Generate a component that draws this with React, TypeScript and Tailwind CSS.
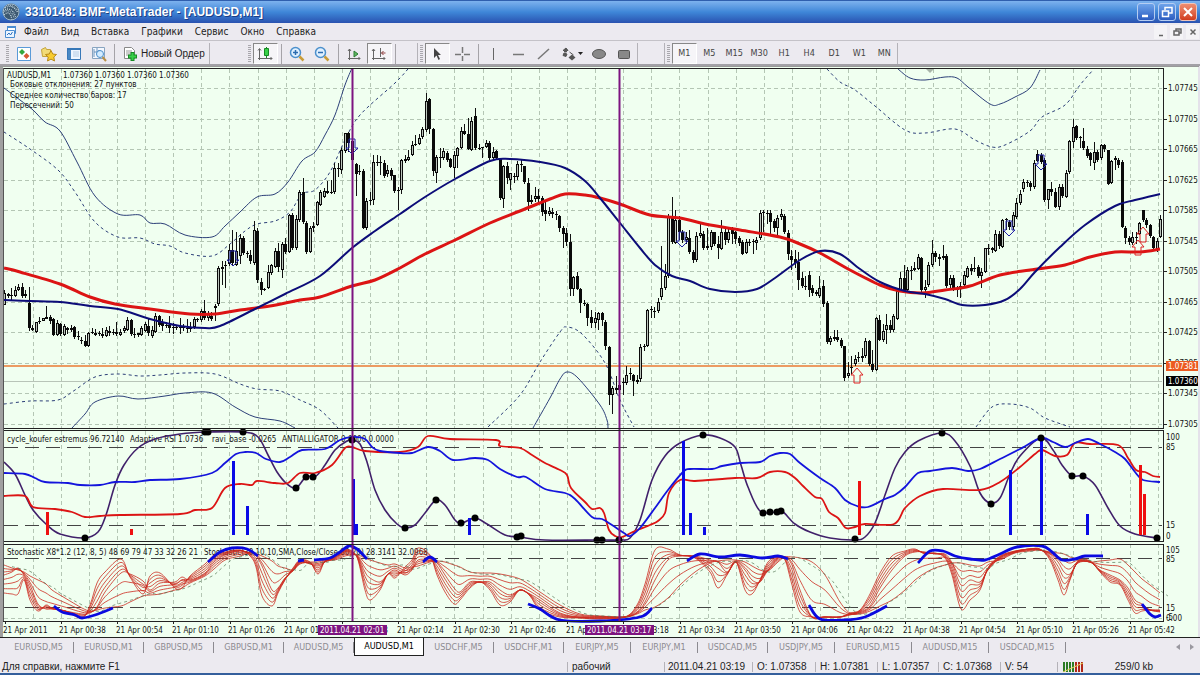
import type { ReactNode } from "react";
import clsx from "clsx";

type Point = [number, number];
// high, open, close, low
type Bar = [number, number, number, number];

const BAR_STEP = 3.515;

const bars: Bar[] = [
  [290,305,293,305],[293,294,296,298],[288,296,295,300],[286,296,290,297],[284,290,287,291],[283,287,296,298],[290,294,296,298],[287,303,328,331],
  [325,328,330,331],[322,332,322,333],[317,322,321,324],[318,321,318,320],[306,319,317,319],[315,317,321,324],[318,319,335,336],[320,335,323,336],
  [323,324,334,336],[324,335,326,336],[327,328,330,334],[325,330,328,332],[326,327,337,339],[331,336,337,340],[337,340,341,344],[335,341,346,347],
  [332,346,333,347],[328,333,332,334],[329,333,335,336],[331,334,333,336],[328,334,336,338],[327,336,330,337],[326,331,333,336],[329,333,332,335],
  [322,332,334,336],[329,335,332,336],[326,331,328,333],[317,330,320,331],[319,320,334,336],[328,335,334,338],[333,335,333,337],[326,335,328,336],
  [322,331,324,332],[318,326,333,336],[326,336,330,338],[313,332,316,333],[315,316,325,327],[319,322,326,331],[322,325,326,328],[316,325,328,333],
  [323,327,328,334],[325,328,327,330],[318,327,328,334],[324,328,327,331],[319,328,329,333],[322,329,327,332],[317,327,319,329],[318,319,320,322],
  [309,320,311,322],[300,311,318,320],[311,318,314,321],[312,316,319,321],[304,306,308,321],[266,304,268,306],[261,269,267,285],[261,266,265,288],
  [244,264,250,266],[230,250,263,265],[232,265,251,266],[234,256,238,264],[236,238,253,255],[251,253,254,258],[250,255,261,264],[221,263,230,265],
  [228,231,280,283],[278,282,290,295],[288,290,289,291],[265,288,272,289],[264,273,265,275],[248,267,251,268],[243,251,267,272],[242,270,244,278],
  [238,244,252,254],[214,252,215,253],[213,215,248,250],[215,248,219,250],[190,220,192,222],[178,192,222,224],[221,223,252,254],[226,252,228,253],
  [222,228,226,232],[201,225,202,226],[190,205,192,206],[188,197,191,198],[181,191,193,194],[180,192,193,194],[163,192,168,194],[163,168,169,177],
  [148,170,150,174],[133,151,133,153],[132,133,143,152],[138,141,160,176],[163,164,174,196],[165,171,172,175],[169,171,228,229],[198,228,201,230],
  [192,201,200,205],[155,200,162,205],[155,163,162,166],[156,162,163,175],[160,163,176,178],[165,174,170,177],[168,170,176,180],[175,175,191,193],
  [187,191,190,210],[159,190,160,194],[155,161,159,163],[150,160,157,161],[141,155,145,156],[135,145,144,146],[134,144,138,145],[127,137,129,139],
  [93,130,101,132],[98,99,129,134],[128,129,171,176],[155,173,157,183],[148,157,158,168],[148,158,151,160],[151,153,160,162],[158,159,167,168],
  [151,168,155,178],[147,156,148,168],[127,148,131,149],[124,131,134,135],[118,134,149,150],[117,150,121,151],[108,116,148,150],[144,148,149,150],
  [147,148,147,158],[140,147,143,148],[141,143,158,160],[147,158,152,160],[150,151,158,160],[158,159,198,200],[165,199,166,208],[162,166,178,184],
  [173,180,173,190],[173,176,177,183],[161,177,164,180],[160,164,165,172],[166,166,182,184],[178,183,202,211],[195,202,200,204],[187,199,196,202],
  [189,196,199,204],[196,198,212,216],[200,210,214,221],[207,214,211,216],[208,212,214,218],[211,215,214,220],[215,216,228,232],[226,228,234,248],
  [228,233,242,246],[234,242,289,296],[276,289,277,296],[272,276,289,290],[288,289,303,313],[300,303,304,306],[303,304,318,326],[310,317,323,328],
  [312,323,318,328],[312,320,313,330],[312,313,320,326],[320,322,346,350],[346,347,395,405],[386,395,388,414],[376,388,390,394],[380,385,390,398],
  [378,382,383,395],[366,383,375,385],[368,373,374,380],[374,375,381,396],[375,382,380,384],[344,379,347,382],[344,347,346,351],[309,346,310,347],
  [306,310,309,318],[307,312,311,318],[298,311,302,313],[246,297,288,300],[264,288,276,290],[214,276,217,278],[197,216,242,244],[210,243,220,244],
  [216,220,232,240],[230,232,240,243],[232,240,237,244],[230,238,252,254],[250,252,260,263],[232,260,236,262],[223,236,233,238],[231,234,248,250],
  [228,248,246,250],[230,247,232,250],[232,232,244,246],[236,244,248,259],[220,249,232,250],[228,232,240,245],[228,240,232,243],[227,229,234,244],
  [231,232,239,244],[236,238,243,246],[240,242,254,255],[239,253,242,254],[239,242,243,246],[239,242,241,254],[237,243,240,250],[210,238,213,240],
  [210,212,213,232],[210,213,213,224],[210,213,222,236],[219,221,228,232],[215,228,218,235],[209,217,214,220],[214,216,232,234],[230,233,254,260],
  [250,256,260,270],[250,259,263,268],[252,262,280,290],[272,278,286,288],[276,286,286,290],[271,275,290,297],[285,288,293,296],[290,292,294,296],
  [276,296,288,298],[280,286,304,307],[301,303,342,344],[336,342,338,345],[330,339,337,341],[330,337,340,342],[338,340,346,348],[346,346,378,381],
  [362,376,373,378],[356,368,367,374],[355,364,359,366],[352,358,357,362],[348,358,356,362],[338,356,341,358],[340,341,364,366],[350,364,370,372],
  [317,370,318,371],[315,320,340,341],[324,340,331,342],[314,330,325,344],[320,325,330,333],[314,330,316,332],[288,319,291,320],[272,290,278,292],
  [265,278,291,293],[267,290,270,293],[266,270,270,280],[262,270,268,271],[254,269,257,270],[257,258,290,292],[280,290,287,298],[262,285,265,287],
  [240,265,253,267],[251,253,257,262],[254,259,257,266],[245,258,256,260],[254,256,286,288],[275,285,278,289],[275,278,289,291],[286,290,289,297],
  [282,289,286,298],[271,285,275,287],[266,277,268,278],[264,268,271,275],[257,269,268,272],[265,267,276,278],[268,276,272,288],[248,272,248,273],
  [244,248,249,255],[247,248,250,253],[230,251,234,252],[231,234,246,249],[219,247,220,248],[218,219,220,230],[220,222,227,230],[212,227,215,230],
  [198,217,203,219],[190,203,194,205],[179,189,182,192],[180,182,183,187],[181,183,187,191],[160,187,163,189],[150,154,161,162],[153,155,162,164],
  [158,160,200,202],[189,200,189,209],[182,189,192,196],[188,192,207,208],[184,207,187,210],[184,187,196,198],[170,197,173,198],[140,172,141,174],
  [119,142,127,148],[125,126,138,140],[136,138,137,148],[128,141,148,150],[146,149,156,158],[152,153,160,166],[142,163,152,170],[150,152,160,162],
  [144,158,145,160],[144,145,149,152],[150,150,184,185],[160,183,161,184],[156,160,158,170],[158,160,165,168],[160,162,227,228],[226,228,238,244],
  [236,238,242,245],[232,243,237,245],[232,238,237,244],[222,234,223,235],[210,210,220,222],[218,220,225,228],[224,225,236,238],[236,237,248,250],
  [238,250,241,252],[215,237,219,238],
];

const slowMa = "4,268 20,272 60,284 90,297 115,304 150,309 190,314 215,314 240,310 270,306 300,300 320,297 352,286 375,280 400,268 425,254 455,240 490,223 520,211 550,199 565,194 585,195 600,198 620,204 650,215 680,218 705,224 740,230 780,237 800,244 820,253 850,270 880,285 900,291 922,293 945,290 970,286 1000,275 1030,270 1065,265 1090,257 1115,252 1140,252 1160,249";
const fastMa = "4,300 30,301 60,302 90,306 118,309 150,319 180,326 205,328 220,326 255,309 285,294 320,276 352,248 375,231 400,214 425,197 455,179 490,161 510,159 540,162 565,168 585,181 600,198 620,223 640,248 655,265 672,276 690,281 710,289 735,292 757,289 775,278 800,260 820,251 840,254 860,269 880,282 905,291 925,294 945,299 962,305 985,305 1005,300 1020,289 1035,272 1060,247 1085,225 1115,206 1135,200 1160,194";

const solidBands = [
  "4,88 20,100 33,110 45,122 60,131 77,162 95,196 118,214 140,215 150,223 165,224 185,235 212,237 225,226 240,212 257,197 275,194 288,182 302,161 315,152 325,135 335,115 345,85 352,68",
  "898,69 910,78 925,80 945,77 957,78 968,87 990,104 1000,104 1015,97 1030,88 1040,70",
  "72,428 85,414 95,402 118,396 138,399 165,396 185,393 212,393 235,407 255,417 280,421 295,428",
  "533,428 550,398 560,379 567,372 578,378 600,405 607,420 608,428",
];
const dashedBands = [
  "4,132 30,149 58,170 75,192 95,222 118,237 140,238 155,244 170,246 185,253 212,256 230,244 245,231 257,224 275,221 290,212 302,194 315,190 330,172 345,140 360,115 395,83 408,69",
  "827,69 840,82 855,90 875,106 905,130 925,133 955,129 975,140 992,147 1005,145 1030,131 1042,117 1065,105 1080,85 1093,70",
  "4,404 30,401 58,400 75,390 95,377 118,374 140,376 160,375 185,373 215,374 240,384 257,389 280,391 300,400 320,410 338,428",
  "488,427 520,395 540,362 560,332 567,327 582,334 605,363 620,400 634,427",
  "976,427 992,407 1010,404 1030,408 1045,418 1070,427",
];

const raviBlue = "4,473 25,474 35,478 45,482 68,483 80,485 100,485 115,482 135,482 150,480 180,479 212,473 225,463 236,454 245,452 256,453 266,459 280,462 290,457 302,450 325,449 340,440 352,437 365,439 372,447 380,451 400,453 412,453 428,447 440,451 453,460 475,458 488,460 500,469 517,477 526,477 545,489 565,493 575,499 592,517 602,519 612,525 624,533 630,536 640,528 655,508 668,490 683,472 690,469 712,469 722,466 740,463 760,462 770,456 780,453 790,454 800,463 820,478 835,488 845,500 857,506 868,507 885,499 895,495 905,487 918,473 930,471 952,468 968,471 980,469 1000,459 1020,449 1041,438 1053,442 1065,447 1075,443 1088,439 1100,444 1115,452 1125,459 1135,472 1143,480 1160,482";
const raviRed = "4,496 25,496 33,507 55,509 72,512 85,517 100,516 120,515 180,514 195,510 212,508 225,488 240,484 252,485 257,481 275,483 288,483 300,473 315,473 332,465 345,448 352,447 365,451 400,452 418,447 428,436 450,439 496,440 500,446 520,448 532,455 545,463 560,470 567,475 571,488 585,502 592,509 600,508 604,513 609,530 615,536 622,537 635,531 650,525 658,521 665,513 669,493 680,480 695,481 735,478 757,478 770,472 785,472 795,478 803,486 815,497 822,499 829,512 838,518 846,528 855,527 865,524 894,524 905,508 920,496 943,489 980,490 1000,482 1020,467 1035,454 1042,450 1055,456 1067,455 1075,443 1090,444 1118,445 1128,458 1136,470 1145,472 1153,476 1160,477";
const cycle = "4,462 15,474 25,495 33,510 47,525 60,534 84,538 98,532 106,515 115,485 124,465 138,448 155,439 180,434 208,432 243,432 258,437 268,455 277,472 287,484 296,488 306,477 316,476 325,465 335,450 347,441 353,440 360,444 367,462 375,490 385,510 397,524 405,528 415,525 425,513 436,500 445,505 455,520 462,523 475,518 487,524 505,535 520,537 545,540 600,540 620,540 630,538 640,520 652,480 665,456 680,443 703,435 720,438 735,447 741,465 748,487 760,511 775,512 782,511 795,524 810,532 830,538 855,540 865,537 875,523 885,495 895,468 905,452 918,441 942,433 955,441 970,466 980,493 990,503 1000,498 1010,474 1020,456 1041,438 1053,450 1062,465 1072,476 1083,476 1095,485 1108,508 1120,526 1135,534 1157,538";

const cycleDots: Point[] = [
  [85,538],[205,432],[208,432],[243,432],[296,488],[306,477],[313,477],[352,440],[405,528],[436,500],[461,523],[475,518],[517,537],[521,536],
  [597,540],[602,540],[619,540],[703,435],[763,513],[770,512],[777,512],[781,511],[855,539],[942,433],[991,504],[1041,438],[1072,476],[1083,476],[1157,538],
];

const signals = [
  { x: 47, top: 512, up: false }, { x: 131, top: 529, up: false }, { x: 233, top: 461, up: true }, { x: 247, top: 506, up: true },
  { x: 353, top: 479, up: true }, { x: 356, top: 524, up: true }, { x: 469, top: 518, up: true }, { x: 683, top: 441, up: true },
  { x: 690, top: 513, up: true }, { x: 704, top: 527, up: true }, { x: 859, top: 481, up: false }, { x: 1010, top: 470, up: true },
  { x: 1041, top: 438, up: true }, { x: 1087, top: 514, up: true }, { x: 1140, top: 465, up: false }, { x: 1144, top: 494, up: false },
];

// x, fast, middle, slow
const stochastic: Bar[] = [
  [4,593,575,565],[12,594,572,568],[18,594,568,570],[24,580,575,572],[30,600,585,576],[38,611,604,580],[46,605,609,584],[52,608,609,590],[65,611,611,598],
  [82,618,614,608],[90,605,613,611],[97,583,607,610],[105,572,592,608],[121,559,573,606],[130,577,574,602],[143,594,581,596],[150,576,590,595],[160,573,583,594],
  [175,588,582,590],[182,588,577,588],[190,576,580,583],[205,564,573,576],[214,555,562,569],[225,552,555,560],[240,550,551,556],[250,556,553,552],[256,567,556,554],
  [262,596,566,556],[272,606,590,561],[278,593,588,566],[285,580,578,568],[293,568,571,570],[300,560,562,564],[310,562,564,562],[318,574,566,562],[325,561,562,560],
  [335,556,558,560],[345,550,552,556],[352,551,553,555],[358,560,557,555],[365,590,572,558],[370,600,578,560],[380,590,582,563],[388,574,574,565],[395,578,570,564],
  [405,567,575,568],[412,560,570,567],[418,548,560,566],[430,555,560,562],[437,575,563,561],[445,592,575,562],[454,604,588,565],[460,600,592,567],[470,588,582,572],
  [480,582,582,573],[490,590,582,573],[500,605,590,574],[510,602,595,576],[520,590,590,579],[530,596,594,585],[540,610,600,592],[560,617,613,605],[580,618,617,614],
  [600,619,617,616],[625,617,617,617],[637,605,612,614],[645,584,602,610],[655,550,580,607],[668,549,560,598],[680,555,556,585],[695,558,556,572],[710,572,560,563],
  [718,588,562,561],[727,575,572,560],[736,562,562,560],[745,590,570,562],[752,594,580,566],[760,580,582,570],[768,562,570,571],[778,557,558,562],[785,560,557,557],
  [792,585,565,557],[800,612,590,558],[812,617,617,562],[825,617,617,575],[840,617,617,602],[850,613,615,613],[860,610,612,614],[870,594,606,611],[880,573,588,606],
  [892,556,570,600],[905,551,556,590],[915,549,552,580],[925,554,552,573],[935,553,554,568],[945,558,554,565],[952,575,563,563],[961,609,585,563],[970,600,580,565],
  [980,590,582,566],[988,568,570,562],[1000,556,558,560],[1015,551,552,553],[1030,549,549,551],[1040,549,550,550],[1050,560,554,552],[1058,580,562,553],
  [1064,595,572,554],[1070,580,574,557],[1078,561,563,559],[1090,561,562,562],[1100,572,570,561],[1110,582,575,560],[1120,585,580,559],[1128,600,588,565],
  [1135,613,600,572],[1142,611,604,579],[1150,610,610,585],[1160,610,612,593],
];

const extremes = [
  "54,606 62,612 75,615 82,618 95,615 113,608",
  "208,562 220,552 232,548 247,549 258,556",
  "298,561 304,560",
  "314,560 330,558 340,552 349,546 357,549 367,559",
  "423,562 430,557 437,562",
  "528,604 540,609 560,620 600,621 640,617 652,608",
  "687,561 700,554 720,557 740,555 762,558 778,556 788,559",
  "809,605 820,619 845,620 865,617 887,606",
  "918,563 930,551 943,551 955,556 970,559 985,560 1000,554 1017,547 1042,546 1052,552 1062,560 1075,559 1085,556 1103,556",
  "1142,604 1150,614 1155,617 1161,615",
];

const prices = ["1.07745", "1.07705", "1.07665", "1.07625", "1.07585", "1.07545", "1.07505", "1.07465", "1.07425", "1.07385", "1.07345", "1.07305"];
const times = [
  "2011", "00:38", "00:54", "01:10", "01:26", "01:42", "01:58", "02:14", "02:30", "02:46", "03:02",
  "03:18", "03:34", "03:50", "04:06", "04:22", "04:38", "04:54", "05:10", "05:26", "05:42",
];

// Catmull-Rom spline through the points
function smooth(points: Point[]) {
  let d = `M${points[0][0]} ${points[0][1]}`;
  for (let i = 0; i < points.length - 1; i++) {
    const a = points[i - 1] ?? points[i];
    const b = points[i];
    const c = points[i + 1];
    const e = points[i + 2] ?? c;
    d += `C${b[0] + (c[0] - a[0]) / 6} ${b[1] + (c[1] - a[1]) / 6} ${c[0] - (e[0] - b[0]) / 6} ${c[1] - (e[1] - b[1]) / 6} ${c[0]} ${c[1]}`;
  }
  return d;
}

function parse(line: string) {
  return line.split(" ").map((p) => p.split(",").map(Number) as Point);
}

function stochasticLine(k: number) {
  return smooth(
    stochastic.map(([x, fast, mid, slow]) => [x, k < 0.5 ? fast + (mid - fast) * k * 2 : mid + (slow - mid) * (k - 0.5) * 2])
  );
}

function Curve({ line, color, width = 1, dash }: { line: string; color: string; width?: number; dash?: string }) {
  return <path d={smooth(parse(line))} fill="none" stroke={color} strokeWidth={width} strokeDasharray={dash} strokeLinejoin="round" />;
}

function DownArrow({ x, y }: { x: number; y: number }) {
  return <path d={`M${x - 3} ${y}h6v9h3l-6 6l-6 -6h3z`} fill="none" stroke="#2222aa" />;
}

function UpArrow({ x, y }: { x: number; y: number }) {
  return <path d={`M${x - 3} ${y + 15}h6v-8h3l-6 -7l-6 7h3z`} fill="none" stroke="#dd2222" />;
}

function ChartGrid() {
  const columns = Array.from({ length: 41 }, (_, i) => Math.round(32.5 + i * 28.13));
  return (
    <g stroke="#b4c6b4" strokeDasharray="4 3" shapeRendering="crispEdges">
      {columns.map((x) => (
        <path key={x} d={`M${x}.5 69V428M${x}.5 431V541M${x}.5 544V621`} />
      ))}
      {prices.map((p, i) => (
        <path key={p} d={`M4 ${Math.round(88 + i * 30.5)}.5H1162`} />
      ))}
      <path d="M4 541.5H1162M4 618.5H1162" />
    </g>
  );
}

function PriceBars() {
  return (
    <g shapeRendering="crispEdges">
      {bars.map(([high, open, close, low], i) => {
        const x = Math.round(4 + i * BAR_STEP);
        const top = Math.min(open, close);
        const height = Math.max(Math.abs(close - open), 1);
        return (
          <g key={i}>
            <rect x={x} y={high} width={1} height={low - high} fill="#111" />
            <rect x={x - 1} y={top} width={3} height={height} fill="#0a0a0a" />
            {close < open && height > 2 && <rect x={x} y={top + 1} width={1} height={height - 2} fill="#bcc6bc" />}
          </g>
        );
      })}
    </g>
  );
}

function Chart() {
  return (
    <svg
      viewBox="0 66 1200 571"
      className="block w-full h-auto font-['DejaVu_Sans_Condensed','DejaVu_Sans',sans-serif]"
      role="img"
      aria-label="AUDUSD,M1"
      fontSize={8}
      fill="#111"
    >
      <defs>
        <clipPath id="plot">
          <rect x={4} y={68} width={1159} height={553} />
        </clipPath>
      </defs>
      <rect x={0} y={66} width={1200} height={571} fill="#f0fff0" />
      <rect x={0} y={66} width={3} height={571} fill="#a0a0a0" />
      <rect x={1198} y={66} width={2} height={571} fill="#e4e2ea" />
      <ChartGrid />

      <g clipPath="url(#plot)">
        <path d="M4 381.5H1162" stroke="#b8c4b8" shapeRendering="crispEdges" />
        <path d="M4 366H1162" stroke="#ec9b62" strokeWidth={2} shapeRendering="crispEdges" />
        {solidBands.map((line) => (
          <Curve key={line} line={line} color="#2c3f78" />
        ))}
        {dashedBands.map((line) => (
          <Curve key={line} line={line} color="#2c3f78" dash="3 3" />
        ))}
        <PriceBars />
        <Curve line={slowMa} color="#dc1414" width={3} />
        <Curve line={fastMa} color="#0c0c78" width={2} />
        <DownArrow x={233} y={251} />
        <DownArrow x={352} y={139} />
        <DownArrow x={682} y={232} />
        <DownArrow x={1009} y={221} />
        <DownArrow x={1041} y={155} />
        <UpArrow x={857} y={368} />
        <UpArrow x={1143} y={227} />
        <UpArrow x={1138} y={240} />
        <path d="M926 69h8l-4 4z" fill="#a8b4a8" />
      </g>

      <g stroke="#444" strokeDasharray="14 7" shapeRendering="crispEdges">
        <path d="M4 447.5H1162M4 525.5H1162M4 558.5H1162M4 607.5H1162" />
      </g>

      <g>
        <text x={7} y={442}>cycle_koufer estremus 96.72140</text>
        <text x={130} y={442}>Adaptive RSI 1.0736</text>
        <text x={212} y={442}>ravi_base -0.0265</text>
        <text x={282} y={442}>ANTIALLIGATOR 0.0000 0.0000</text>
        <text x={7} y={555}>Stochastic X8*1.2 (12, 8, 5) 48 69 79 47 33 32 26 21</text>
        <text x={204} y={555}>Stochastic(30,10,10,SMA,Close/Close,80,20) 28.3141 32.0968</text>
        <text x={7} y={78}>AUDUSD,M1</text>
        <text x={63} y={78}>1.07360 1.07360 1.07360 1.07360</text>
        <text x={10} y={87}>Боковые отклонения: 27 пунктов</text>
        <text x={10} y={98}>Среднее количество баров: 17</text>
        <text x={10} y={108}>Пересечений: 50</text>
      </g>

      <Curve line={cycle} color="#40206a" width={1.6} />
      <Curve line={raviRed} color="#dc1414" width={1.8} />
      <Curve line={raviBlue} color="#1414dc" width={1.8} />
      {signals.map((s) => (
        <rect key={s.x} x={s.x - 1} y={s.top} width={3} height={535 - s.top} fill={s.up ? "#0a0ae6" : "#ee1010"} />
      ))}
      {cycleDots.map(([x, y], i) => (
        <circle key={i} cx={x} cy={y} r={3.5} fill="#000" />
      ))}

      {[0, 0.12, 0.25, 0.38, 0.5, 0.65, 0.82, 1].map((k) => (
        <path key={k} d={stochasticLine(k)} fill="none" stroke="#cc2a1e" strokeWidth={0.8} />
      ))}
      <path d={stochasticLine(0.92)} fill="none" stroke="#557755" strokeWidth={0.7} strokeDasharray="3 3" transform="translate(8 0)" clipPath="url(#plot)" />
      {extremes.map((line) => (
        <Curve key={line} line={line} color="#0a0ae0" width={2.8} />
      ))}

      <path d="M352.5 68V622M619.5 68V622" stroke="#7d1480" strokeWidth={2} />

      <g stroke="#222" fill="none" shapeRendering="crispEdges">
        <path d="M3 68.5H1163.5V428.5M3 428.5H1164M3 430.5H1164M1163.5 430V541M3 541.5H1164M3 544.5H1164M1163.5 544V621M3 621.5H1164" />
        <path d="M3.5 68V621" stroke="#555" />
        <path d="M0 66.5H1199" stroke="#999" />
        {prices.map((p, i) => (
          <path key={p} d={`M1163 ${Math.round(88 + i * 30.5)}.5h4`} />
        ))}
        {times.map((t, i) => (
          <path key={t} d={`M${Math.round(4.5 + i * 56.26)}.5 621v3`} />
        ))}
      </g>

      {prices.map((p, i) => (
        <text key={p} x={1168} y={Math.round(91 + i * 30.5)}>{p}</text>
      ))}
      <rect x={1166} y={361} width={32} height={10} fill="#ec5a20" />
      <text x={1168} y={369} fill="#fff">1.07381</text>
      <rect x={1166} y={376} width={32} height={10} fill="#000" />
      <text x={1168} y={384} fill="#fff">1.07360</text>
      <text x={1166} y={440}>100</text>
      <text x={1166} y={450}>85</text>
      <text x={1166} y={528}>15</text>
      <text x={1166} y={539}>0</text>
      <text x={1166} y={553}>105</text>
      <text x={1166} y={562}>85</text>
      <text x={1166} y={611}>15</text>
      <text x={1166} y={620}>-5</text>
      <text x={1166} y={621}>0.00</text>

      {times.map((t, i) => (
        <text key={t} x={Math.round(3 + i * 56.26)} y={633}>{`21 Apr ${t}`}</text>
      ))}
      <rect x={318} y={625} width={69} height={10} fill="#7d1480" />
      <text x={320} y={633} fill="#fff">2011.04.21 02:01</text>
      <rect x={585} y={625} width={69} height={10} fill="#7d1480" />
      <text x={587} y={633} fill="#fff">2011.04.21 03:17</text>
    </svg>
  );
}

function Icon({ children }: { children: ReactNode }) {
  return (
    <svg viewBox="0 0 16 16" width={16} height={16} fill="none" aria-hidden="true">
      {children}
    </svg>
  );
}

function ToolButton({ label, active, children }: { label: string; active?: boolean; children: ReactNode }) {
  return (
    <button
      type="button"
      title={label}
      aria-pressed={active}
      className={clsx(
        "flex h-[21px] w-[25px] shrink-0 items-center justify-center",
        active && "border border-t-[#888] border-l-[#888] border-r-white border-b-white bg-[#f6f5f8]"
      )}
    >
      {children}
    </button>
  );
}

function Separator() {
  return <div className="mx-[3px] h-[20px] w-px shrink-0 bg-[#a5a3a8]" />;
}

function Edge() {
  return <div className="h-[22px] w-px shrink-0 bg-[#b4b2b8]" />;
}

function Grip() {
  return <div className="mx-[2px] h-[18px] w-[3px] shrink-0 bg-[repeating-linear-gradient(#a9a7ad_0_1px,#eceaf0_1px_2px)]" />;
}

function TitleBar() {
  return (
    <header className="flex h-[23px] shrink-0 items-center gap-[5px] bg-linear-to-b from-[#7db2ee] via-[#3f87d8] to-[#2a52b0] border-t border-[#2f5fae] px-[2px] text-white">
      <svg viewBox="0 0 18 18" width={18} height={18} aria-hidden="true">
        <circle cx="9" cy="9" r="8.5" fill="#3c5870" />
        <g fill="none" stroke="#c4d6e0" strokeDasharray="1 1">
          <path d="M3 5c4-3 9-2 12 4M1.500 8c4-4 10-2 12 6M2 12c4-4 7-2 8 5" strokeWidth="1.300" />
          <path d="M6 2c5 0 9 3 10 7M1 10c3-4 9-3 11 5" />
        </g>
        <circle cx="9" cy="9" r="8" fill="none" stroke="#9fb8cc" />
      </svg>
      <h1 className="flex-1 truncate font-['Liberation_Sans',sans-serif] text-[12px] leading-[16px] font-bold [text-shadow:1px_1px_0_#1b3f86]">
        3310148: BMF-MetaTrader - [AUDUSD,M1]
      </h1>
      <div className="flex gap-[3px] pr-px">
        <button type="button" title="Свернуть" className="h-[18px] w-[18px] rounded-[3px] border border-[#b5cdf2] bg-linear-to-b from-[#6ea3ea] to-[#2c5cc0]">
          <svg viewBox="0 0 16 16"><path d="M4 12h6" stroke="#fff" strokeWidth="2.500" /></svg>
        </button>
        <button type="button" title="Развернуть" className="h-[18px] w-[18px] rounded-[3px] border border-[#b5cdf2] bg-linear-to-b from-[#6ea3ea] to-[#2c5cc0]">
          <svg viewBox="0 0 16 16" fill="none" stroke="#fff"><path d="M6 6V3.500h7V9h-3" strokeWidth="1.500" /><path d="M3.500 7h6v5.500h-6z" strokeWidth="1.500" /></svg>
        </button>
        <button type="button" title="Закрыть" className="h-[18px] w-[18px] rounded-[3px] border border-[#f0c4b8] bg-linear-to-b from-[#ee8d70] to-[#d13c1c]">
          <svg viewBox="0 0 16 16"><path d="M4 4l8 8M12 4l-8 8" stroke="#fff" strokeWidth="2" /></svg>
        </button>
      </div>
    </header>
  );
}

function MenuBar() {
  return (
    <nav className="flex h-[18px] shrink-0 items-center border-b border-[#c4c2c8] pl-1 text-[10px]">
      <svg viewBox="0 0 13 13" width={13} height={13} fill="none" aria-hidden="true">
        <path d="M3.500 1.500h8v7h-8z" fill="#fff" stroke="#4c8cd0" />
        <path d="M3 2h9" stroke="#4c8cd0" strokeWidth="2" />
        <path d="M1.500 5.500h9v7h-9z" fill="#eaf4ff" stroke="#4c8cd0" />
        <path d="M3 10l2-2 1.500 2 2-3" stroke="#2b6fc0" />
      </svg>
      <div className="flex flex-1 gap-3 pl-[7px]">
        {["Файл", "Вид", "Вставка", "Графики", "Сервис", "Окно", "Справка"].map((item) => (
          <button key={item} type="button">{item}</button>
        ))}
      </div>
      <div className="flex gap-[3px] pr-px">
        {[
          { name: "Свернуть окно", path: "M4 9.500h4" },
          { name: "Восстановить окно", path: "M5 4.500V3h5v4H8M3 5h5v4H3z" },
          { name: "Закрыть окно", path: "M3.500 3.500l5 5M8.500 3.500l-5 5" },
        ].map((b) => (
          <button key={b.name} type="button" title={b.name} className="flex h-[14px] w-[13px] items-center justify-center bg-[#f4f3f6]">
            <svg viewBox="0 0 12 12" width={12} height={12}><path d={b.path} fill="none" stroke="#666" strokeWidth="1.500" /></svg>
          </button>
        ))}
      </div>
    </nav>
  );
}

function Toolbar() {
  return (
    <div className="flex h-[25px] shrink-0 items-center overflow-hidden border-b-2 border-[#a2a0a6] pt-[2px] text-[9px] text-[#444]">
      <div className="flex shrink-0 items-center pl-1 pr-[36px]">
        <Grip />
        <ToolButton label="Новый график">
          <Icon>
            <path d="M1.500 1.500h13v13h-13z" fill="#fff" stroke="#5a9ad8" />
            <path d="M6 3l3 3-3 3-3-3z" fill="#34a83c" />
            <path d="M10.500 7l3 3-3 3-3-3z" fill="#d85a32" />
          </Icon>
        </ToolButton>
        <ToolButton label="Профили">
          <Icon>
            <path d="M.5 3.500l4-2 1 2h4v7h-8z" fill="#f2dc78" stroke="#c4a43c" />
            <path d="M10 4.500l1.800 3.500 3.700.5-2.700 2.500.7 4-3.500-1.900L6.500 15l.7-4-2.700-2.500 3.700-.5z" fill="#f8cc30" stroke="#b88a18" />
          </Icon>
        </ToolButton>
        <ToolButton label="Навигатор">
          <Icon>
            <path d="M1.500 2.500h13v11h-13z" fill="#eef6ff" stroke="#3878b8" />
            <path d="M1 3h14" stroke="#3878b8" strokeWidth="2" />
            <path d="M2 4h3v9H2z" fill="#4a88c4" />
            <path d="M7 6h6M7 8h6M7 10h6" stroke="#b4cce4" />
          </Icon>
        </ToolButton>
        <ToolButton label="Окно данных">
          <Icon>
            <path d="M1.500 1.500h12v11h-12z" fill="#f4f8ff" stroke="#88a4c0" />
            <path d="M3 3v8M6 2v7M3 6h3l2-2 2 2" stroke="#6c94bc" />
            <circle cx="9" cy="8" r="3.500" fill="#d4ecff" stroke="#4c90cc" />
            <path d="M11.500 11l3.500 4" stroke="#b89048" strokeWidth="2" />
          </Icon>
        </ToolButton>
        <Separator />
        <button type="button" className="flex shrink-0 items-center gap-[3px] px-1 font-['Liberation_Sans',sans-serif] text-[10px] whitespace-nowrap text-[#222]">
          <Icon>
            <path d="M2.500 1.500h7l3 3v8h-10z" fill="#fff" stroke="#888" />
            <path d="M4 5h6M4 7h6M4 9h4" stroke="#999" />
            <path d="M10.500 6v9M6 10.500h9" stroke="#178a24" strokeWidth="4" />
            <path d="M10.500 7v7M7 10.500h7" stroke="#38d048" strokeWidth="2" />
          </Icon>
          Новый Ордер
        </button>
        <Edge />
      </div>

      <div className="flex shrink-0 items-center">
        <Grip />
        <ToolButton label="Японские свечи" active>
          <Icon>
            <path d="M2.500 3v11M1 12.500h14M1 4.500l1.500-2L4 4.500M13.500 11l1.500 1.500-1.500 1.500" stroke="#666" />
            <path d="M9.500 1v11" stroke="#178a24" />
            <path d="M7.500 2.500h4v7h-4z" fill="#38d048" stroke="#178a24" />
          </Icon>
        </ToolButton>
        <Separator />
        <ToolButton label="Приблизить">
          <Icon>
            <circle cx="6.500" cy="6.500" r="5" fill="#dff0ff" stroke="#4c90cc" strokeWidth="1.500" />
            <path d="M4 6.500h5M6.500 4v5" stroke="#2c6cb0" strokeWidth="1.500" />
            <path d="M10.500 10.500l4 4" stroke="#c89c38" strokeWidth="2.500" />
          </Icon>
        </ToolButton>
        <ToolButton label="Отдалить">
          <Icon>
            <circle cx="6.500" cy="6.500" r="5" fill="#dff0ff" stroke="#4c90cc" strokeWidth="1.500" />
            <path d="M4 6.500h5" stroke="#2c6cb0" strokeWidth="1.500" />
            <path d="M10.500 10.500l4 4" stroke="#c89c38" strokeWidth="2.500" />
          </Icon>
        </ToolButton>
        <Separator />
        <ToolButton label="Автопрокрутка">
          <Icon>
            <path d="M3.500 3v11M2 12.500h12M2 5l1.500-2L5 5M12.500 11l1.500 1.500-1.500 1.500" stroke="#666" />
            <path d="M8 5l4 3-4 3z" fill="#5cb860" stroke="#2c7c34" />
          </Icon>
        </ToolButton>
        <ToolButton label="Сдвиг графика" active>
          <Icon>
            <path d="M2.500 3v11M1 12.500h13M1 5l1.500-2L4 5M12.500 11l1.500 1.500-1.500 1.500" stroke="#666" />
            <path d="M9.500 2v9" stroke="#666" />
            <path d="M10.500 7h4M12.500 5l-2 2 2 2" stroke="#8c3c3c" />
          </Icon>
        </ToolButton>
        <Separator />
      </div>

      <div className="flex shrink-0 items-center pl-[18px]">
        <Edge />
        <Grip />
        <ToolButton label="Курсор" active>
          <Icon><path d="M5 2v10l2.500-2.500L9.500 14l1.500-1-2-4h3z" fill="#444" /></Icon>
        </ToolButton>
        <ToolButton label="Перекрестие">
          <Icon><path d="M8.500 1v6M8.500 10v5M1 8.500h6M10 8.500h6" stroke="#777" strokeWidth="1.500" /></Icon>
        </ToolButton>
        <Separator />
        <ToolButton label="Вертикальная линия">
          <Icon><path d="M7.500 2v12" stroke="#666" /></Icon>
        </ToolButton>
        <ToolButton label="Горизонтальная линия">
          <Icon><path d="M2 8.500h11" stroke="#777" strokeWidth="1.500" /></Icon>
        </ToolButton>
        <ToolButton label="Трендовая линия">
          <Icon><path d="M2 13L13 3" stroke="#777" strokeWidth="1.500" /></Icon>
        </ToolButton>
        <button type="button" title="Стрелки" className="flex h-[21px] w-[30px] items-center justify-center gap-px">
          <Icon>
            <path d="M5 2l2 2.500h-1.500v1.500h-2V4.500H2zM3 7l3 1-1 2.500-3-1zM8.500 6l4 3" fill="#555" stroke="#555" />
            <path d="M11 8.500l3.500 3-3.500 3-3.500-3z" fill="#555" />
          </Icon>
          <svg viewBox="0 0 5 3" width={5} height={3}><path d="M0 0h5L2.500 3z" fill="#222" /></svg>
        </button>
        <ToolButton label="Эллипс">
          <Icon><ellipse cx="8" cy="8" rx="6.500" ry="4.500" fill="#888" stroke="#555" /></Icon>
        </ToolButton>
        <ToolButton label="Прямоугольник">
          <Icon><rect x="2.500" y="4.500" width="11" height="8" rx="1" fill="#888" stroke="#555" /></Icon>
        </ToolButton>
        <Edge />
      </div>

      <div className="flex shrink-0 items-center pl-[26px]">
        <Edge />
        <Grip />
        {["M1", "M5", "M15", "M30", "H1", "H4", "D1", "W1", "MN"].map((period, i) => (
          <ToolButton key={period} label={period} active={i === 0}>{period}</ToolButton>
        ))}
        <Edge />
      </div>
    </div>
  );
}

const tabs = [
  "EURUSD,M5", "EURUSD,M1", "GBPUSD,M5", "GBPUSD,M1", "AUDUSD,M5", "AUDUSD,M1", "USDCHF,M5", "USDCHF,M1",
  "EURJPY,M5", "EURJPY,M1", "USDCAD,M5", "USDJPY,M5", "EURUSD,M15", "AUDUSD,M15", "USDCAD,M15",
];

function ChartTabs() {
  return (
    <div className="flex h-[20px] shrink-0 items-start overflow-hidden border-t border-[#222] pl-1 text-[9px] text-[#8c8a90]">
      <div className="flex flex-1" role="tablist">
        {tabs.map((tab) => {
          const active = tab === "AUDUSD,M1";
          return (
            <button
              key={tab}
              type="button"
              role="tab"
              aria-selected={active}
              className={clsx(
                "flex h-[18px] shrink-0 items-center justify-center",
                tab.endsWith("M15") ? "w-[77px]" : tab.includes("JPY") ? "w-[67px]" : "w-[70px]",
                active && "border border-t-0 border-[#222] bg-white text-black"
              )}
            >
              <span className="flex-1">{tab}</span>
              {!active && <span className="h-[11px] w-px bg-[#8c8a90]" />}
            </button>
          );
        })}
      </div>
      <div className="flex h-[18px] items-center gap-[10px] pr-[6px]">
        <button type="button" title="Назад">
          <svg viewBox="0 0 4 6" width={4} height={6}><path d="M4 0v6L0 3z" fill="#9a98a0" /></svg>
        </button>
        <button type="button" title="Вперёд">
          <svg viewBox="0 0 4 6" width={4} height={6}><path d="M0 0v6l4-3z" fill="#9a98a0" /></svg>
        </button>
      </div>
    </div>
  );
}

function StatusBar() {
  return (
    <footer className="flex h-[18px] shrink-0 items-center border-b-2 border-[#345f9c] pt-[3px] font-['Liberation_Sans',sans-serif] text-[10px] whitespace-nowrap">
      <div className="flex-1 pl-[2px]">Для справки, нажмите F1</div>
      <div className="w-[97px] border-l border-[#b4b2b8] pl-1">рабочий</div>
      <div className="w-[88px] border-l border-[#b4b2b8] pl-[3px]">2011.04.21 03:19</div>
      <div className="w-[63px] border-l border-[#b4b2b8] pl-1">O: 1.07358</div>
      <div className="w-[62px] border-l border-[#b4b2b8] pl-1">H: 1.07381</div>
      <div className="w-[61px] border-l border-[#b4b2b8] pl-1">L: 1.07357</div>
      <div className="w-[62px] border-l border-[#b4b2b8] pl-1">C: 1.07368</div>
      <div className="w-[57px] border-l border-[#b4b2b8] pl-1">V: 54</div>
      <div className="flex w-[143px] items-center border-l border-[#b4b2b8] pl-[5px]">
        <svg viewBox="0 0 21 10" width={21} height={10} aria-hidden="true">
          <path d="M1 0v10M4 0v10M7 0v10M10 0v10" stroke="#2c7c24" strokeWidth="2" />
          <path d="M13 0v10M16 0v10M19 0v10" stroke="#b02818" strokeWidth="2" />
          <path d="M0 10L20 1" stroke="#e8d45c" />
        </svg>
        <span className="flex-1 pr-[16px] text-center">259/0 kb</span>
      </div>
    </footer>
  );
}

export default function App() {
  return (
    <main className="flex min-h-screen w-full flex-col bg-[#eceaf0] font-['DejaVu_Sans_Condensed','DejaVu_Sans',sans-serif] leading-none text-[#222]">
      <TitleBar />
      <MenuBar />
      <Toolbar />
      <Chart />
      <ChartTabs />
      <StatusBar />
    </main>
  );
}
